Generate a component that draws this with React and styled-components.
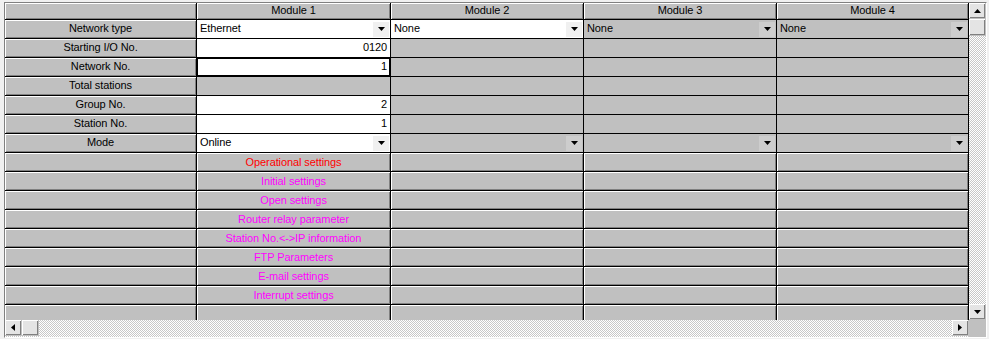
import React from 'react'
import styled, { createGlobalStyle, css } from 'styled-components'

const GlobalStyle = createGlobalStyle`
  html, body {
    margin: 0;
    background: #f0f0f0;
    font-family: "Liberation Sans", Arial, sans-serif;
    font-size: 11px;
    letter-spacing: -0.1px;
  }
`

const raised = css`
  background: #c0c0c0;
  box-shadow: inset 1px 1px 0 #ffffff, inset -1px -1px 0 #808080;
`

const Frame = styled.div`
  margin: 2px 0 0 4px;
  width: 981px;
  height: 334px;
  border: 1px solid;
  border-color: #808080 #ffffff #ffffff #808080;
  display: grid;
  grid-template-columns: 964px 17px;
  grid-template-rows: 317px 17px;
`

const Sheet = styled.div`
  overflow: hidden;
  background: #000;
`

const Table = styled.div`
  display: grid;
  grid-template-columns: 191px 193px 192px 192px 191px;
  grid-template-rows: 16px;
  grid-auto-rows: 18px;
  column-gap: 1px;
  row-gap: 1px;
  background: #000;
  width: 964px;
`

const HeadCell = styled.div`
  ${raised}
  display: flex;
  align-items: center;
  justify-content: center;
  padding-bottom: 1px;
  line-height: 1;
  color: #000;
`

const RowHead = styled(HeadCell)``

const Cell = styled.div`
  position: relative;
  display: flex;
  align-items: center;
  justify-content: ${p => (p.$right ? 'flex-end' : 'flex-start')};
  padding: 0 3px 1px 3px;
  background: ${p => (p.$white ? '#ffffff' : '#c0c0c0')};
  box-shadow: ${p => (p.$focus ? 'inset 0 0 0 1px #000' : 'none')};
  color: #000;
  line-height: 1;
  white-space: nowrap;
`

const ComboText = styled.span`
  flex: 1;
`

const DropButton = styled.span`
  width: 16px;
  height: 15px;
  margin: 1px -2px 0 0;
  display: flex;
  align-items: center;
  justify-content: center;
  background: ${p => (p.$white ? '#f0f0f0' : '#cdcdcd')};
`

const SettingButton = styled.div`
  ${raised}
  display: flex;
  align-items: center;
  justify-content: center;
  color: ${p => p.$color || '#000'};
  line-height: 1;
  white-space: nowrap;
`

const track = css`
  background: repeating-conic-gradient(#c8c8c8 0 25%, #ffffff 0 50%) 0 0 / 2px 2px;
`

const VScroll = styled.div`
  ${track}
  display: flex;
  flex-direction: column;
`

const HScroll = styled.div`
  ${track}
  display: flex;
`

const ScrollButton = styled.div`
  width: 17px;
  height: 16px;
  flex: none;
  display: flex;
  align-items: center;
  justify-content: center;
  background: #e4e4e4;
  box-shadow: inset 1px 1px 0 #ffffff, inset -1px -1px 0 #808080;
  box-sizing: border-box;
  border-right: 1px solid #c0c0c0;
  border-bottom: 1px solid #c0c0c0;
`

const Thumb = styled(ScrollButton)`
  ${p => (p.$horizontal ? 'width: 17px; height: 16px;' : 'width: 17px; height: 17px;')}
`

const Spacer = styled.div`
  flex: 1;
`

const Corner = styled.div`
  background: #c0c0c0;
`

const Arrow = ({ dir = 'down' }) => {
  const pts = {
    down: '0,0 7,0 3.5,4',
    up: '0,4 7,4 3.5,0',
    left: '4,0 4,7 0,3.5',
    right: '0,0 0,7 4,3.5',
  }[dir]
  const vertical = dir === 'up' || dir === 'down'
  return (
    <svg width={vertical ? 7 : 4} height={vertical ? 4 : 7} viewBox={vertical ? '0 0 7 4' : '0 0 4 7'}>
      <polygon points={pts} fill="#000" />
    </svg>
  )
}

const Combo = ({ white, text }) => (
  <Cell $white={white}>
    <ComboText>{text}</ComboText>
    <DropButton $white={white}>
      <Arrow dir="down" />
    </DropButton>
  </Cell>
)

const modules = ['Module 1', 'Module 2', 'Module 3', 'Module 4']

const settings = [
  { label: 'Operational settings', color: '#ff0000' },
  { label: 'Initial settings', color: '#ff00ff' },
  { label: 'Open settings', color: '#ff00ff' },
  { label: 'Router relay parameter', color: '#ff00ff' },
  { label: 'Station No.<->IP information', color: '#ff00ff' },
  { label: 'FTP Parameters', color: '#ff00ff' },
  { label: 'E-mail settings', color: '#ff00ff' },
  { label: 'Interrupt settings', color: '#ff00ff' },
  { label: '', color: '#000' },
]

const EmptyGray = () => (
  <>
    <Cell />
    <Cell />
    <Cell />
  </>
)

export default function App() {
  return (
    <>
      <GlobalStyle />
      <Frame>
        <Sheet>
          <Table>
            <HeadCell />
            {modules.map(m => (
              <HeadCell key={m}>{m}</HeadCell>
            ))}

            <RowHead>Network type</RowHead>
            <Combo white text="Ethernet" />
            <Combo white text="None" />
            <Combo text="None" />
            <Combo text="None" />

            <RowHead>Starting I/O No.</RowHead>
            <Cell $white $right>0120</Cell>
            <EmptyGray />

            <RowHead>Network No.</RowHead>
            <Cell $white $right $focus>1</Cell>
            <EmptyGray />

            <RowHead>Total stations</RowHead>
            <Cell />
            <EmptyGray />

            <RowHead>Group No.</RowHead>
            <Cell $white $right>2</Cell>
            <EmptyGray />

            <RowHead>Station No.</RowHead>
            <Cell $white $right>1</Cell>
            <EmptyGray />

            <RowHead>Mode</RowHead>
            <Combo white text="Online" />
            <Combo text="" />
            <Combo text="" />
            <Combo text="" />

            {settings.map((s, i) => (
              <React.Fragment key={i}>
                <RowHead />
                <SettingButton $color={s.color}>{s.label}</SettingButton>
                <SettingButton />
                <SettingButton />
                <SettingButton />
              </React.Fragment>
            ))}
          </Table>
        </Sheet>

        <VScroll>
          <ScrollButton>
            <Arrow dir="up" />
          </ScrollButton>
          <Thumb />
          <Spacer />
          <ScrollButton>
            <Arrow dir="down" />
          </ScrollButton>
        </VScroll>

        <HScroll>
          <ScrollButton>
            <Arrow dir="left" />
          </ScrollButton>
          <Thumb $horizontal />
          <Spacer />
          <ScrollButton>
            <Arrow dir="right" />
          </ScrollButton>
        </HScroll>
        <Corner />
      </Frame>
    </>
  )
}
